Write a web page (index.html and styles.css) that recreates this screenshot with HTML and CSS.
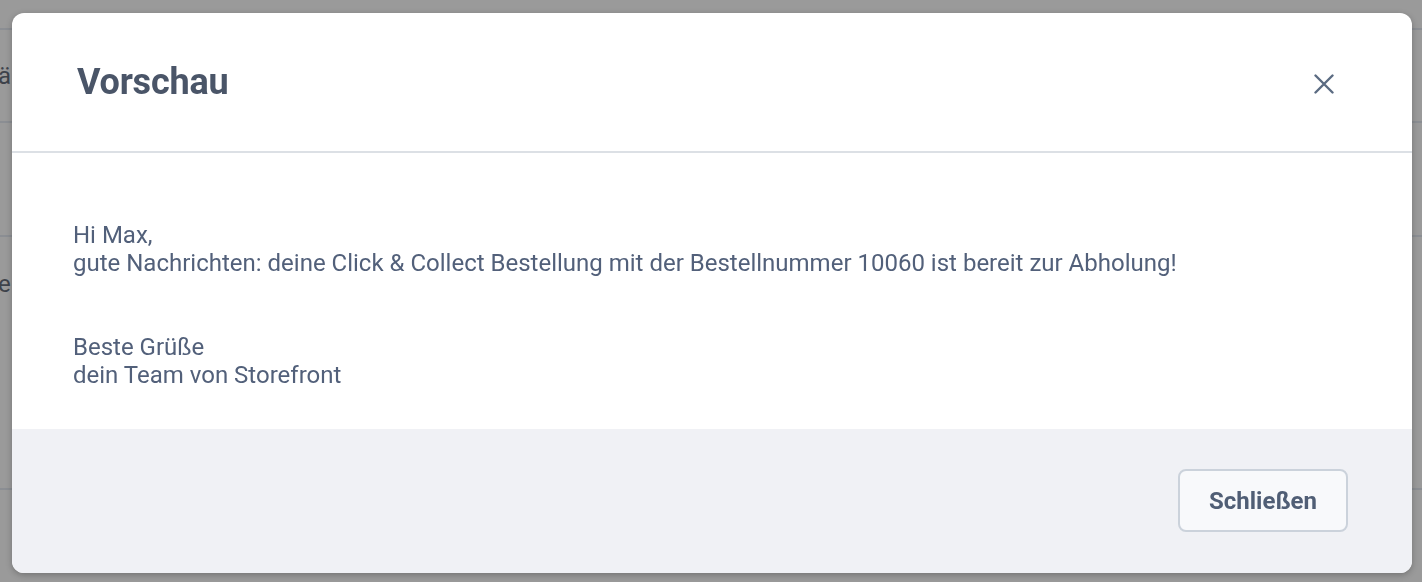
FILE: index.html
```html
<!DOCTYPE html>
<html lang="de">
<head>
<meta charset="utf-8">
<title>Vorschau</title>
<link rel="stylesheet" href="styles.css">
</head>
<body>
<div class="page">
  <div class="row row-1"></div>
  <div class="row row-2"><span class="ghost">ä</span></div>
  <div class="row row-3"></div>
  <div class="row row-4"><span class="ghost ghost-e">e</span></div>
</div>
<div class="overlay">
  <div class="modal">
    <div class="modal-header">
      <h1 class="modal-title">Vorschau</h1>
      <button class="close-btn" aria-label="Schließen">
        <svg width="20" height="20" viewBox="0 0 20 20"><path d="M1.5 1.5 L18.5 18.5 M18.5 1.5 L1.5 18.5" stroke="#5b6b82" stroke-width="2.4" stroke-linecap="round"/></svg>
      </button>
    </div>
    <div class="modal-body">
      <p class="line">Hi Max,</p>
      <p class="line">gute Nachrichten: deine Click &amp; Collect Bestellung mit der Bestellnummer 10060 ist bereit zur Abholung!</p>
      <p class="line spacer"></p>
      <p class="line spacer"></p>
      <p class="line">Beste Grüße</p>
      <p class="line">dein Team von Storefront</p>
    </div>
    <div class="modal-footer">
      <button class="btn">Schließen</button>
    </div>
  </div>
</div>
</body>
</html>
```

FILE: styles.css
```css
* { box-sizing: border-box; }
html, body { margin: 0; padding: 0; }
body {
  background: #9a9a9a;
  font-family: Roboto, "Liberation Sans", sans-serif;
  width: 1422px;
  height: 582px;
  overflow: hidden;
}
.page { display: flex; flex-direction: column; }
.row { border-bottom: 2px solid #8b8e93; display: flex; align-items: center; }
.row-1 { height: 30px; }
.row-2 { height: 93px; }
.row-3 { height: 114px; }
.row-4 { height: 253px; align-items: flex-start; padding-top: 33px; }
.ghost { font-size: 24px; color: #3e434b; margin-left: -2px; line-height: 28px; }
.overlay {
  position: fixed;
  inset: 0;
  padding: 13px 10px 9px 12px;
  display: flex;
}
.modal {
  flex: 1;
  background: #fff;
  border-radius: 12px;
  overflow: hidden;
  display: flex;
  flex-direction: column;
  box-shadow: 0 2px 6px rgba(0,0,0,0.25);
}
.modal-header {
  height: 140px;
  border-bottom: 2px solid #dce0e5;
  display: flex;
  align-items: center;
  justify-content: space-between;
  padding: 4px 73px 0 65px;
}
.modal-title {
  margin: 0 0 4px;
  font-size: 36px;
  font-weight: 700;
  color: #4a5568;
  letter-spacing: -0.2px;
}
.close-btn {
  background: none;
  border: 0;
  padding: 4px;
  width: 30px;
  height: 30px;
  display: flex;
  align-items: center;
  justify-content: center;
  cursor: pointer;
}
.modal-body {
  flex: 1;
  padding: 68px 61px 40px;
  color: #52607a;
  font-size: 24px;
  line-height: 28px;
}
.line { margin: 0; min-height: 28px; }
.modal-footer {
  background: #f0f1f5;
  height: 144px;
  display: flex;
  justify-content: flex-end;
  align-items: flex-start;
  padding: 40px 64px 0 0;
}
.btn {
  width: 170px;
  height: 63px;
  border: 2px solid #cbd2db;
  border-radius: 8px;
  background: #f8f9fb;
  font-family: Roboto, "Liberation Sans", sans-serif;
  font-weight: 700;
  font-size: 24px;
  color: #505e75;
  cursor: pointer;
}
```
